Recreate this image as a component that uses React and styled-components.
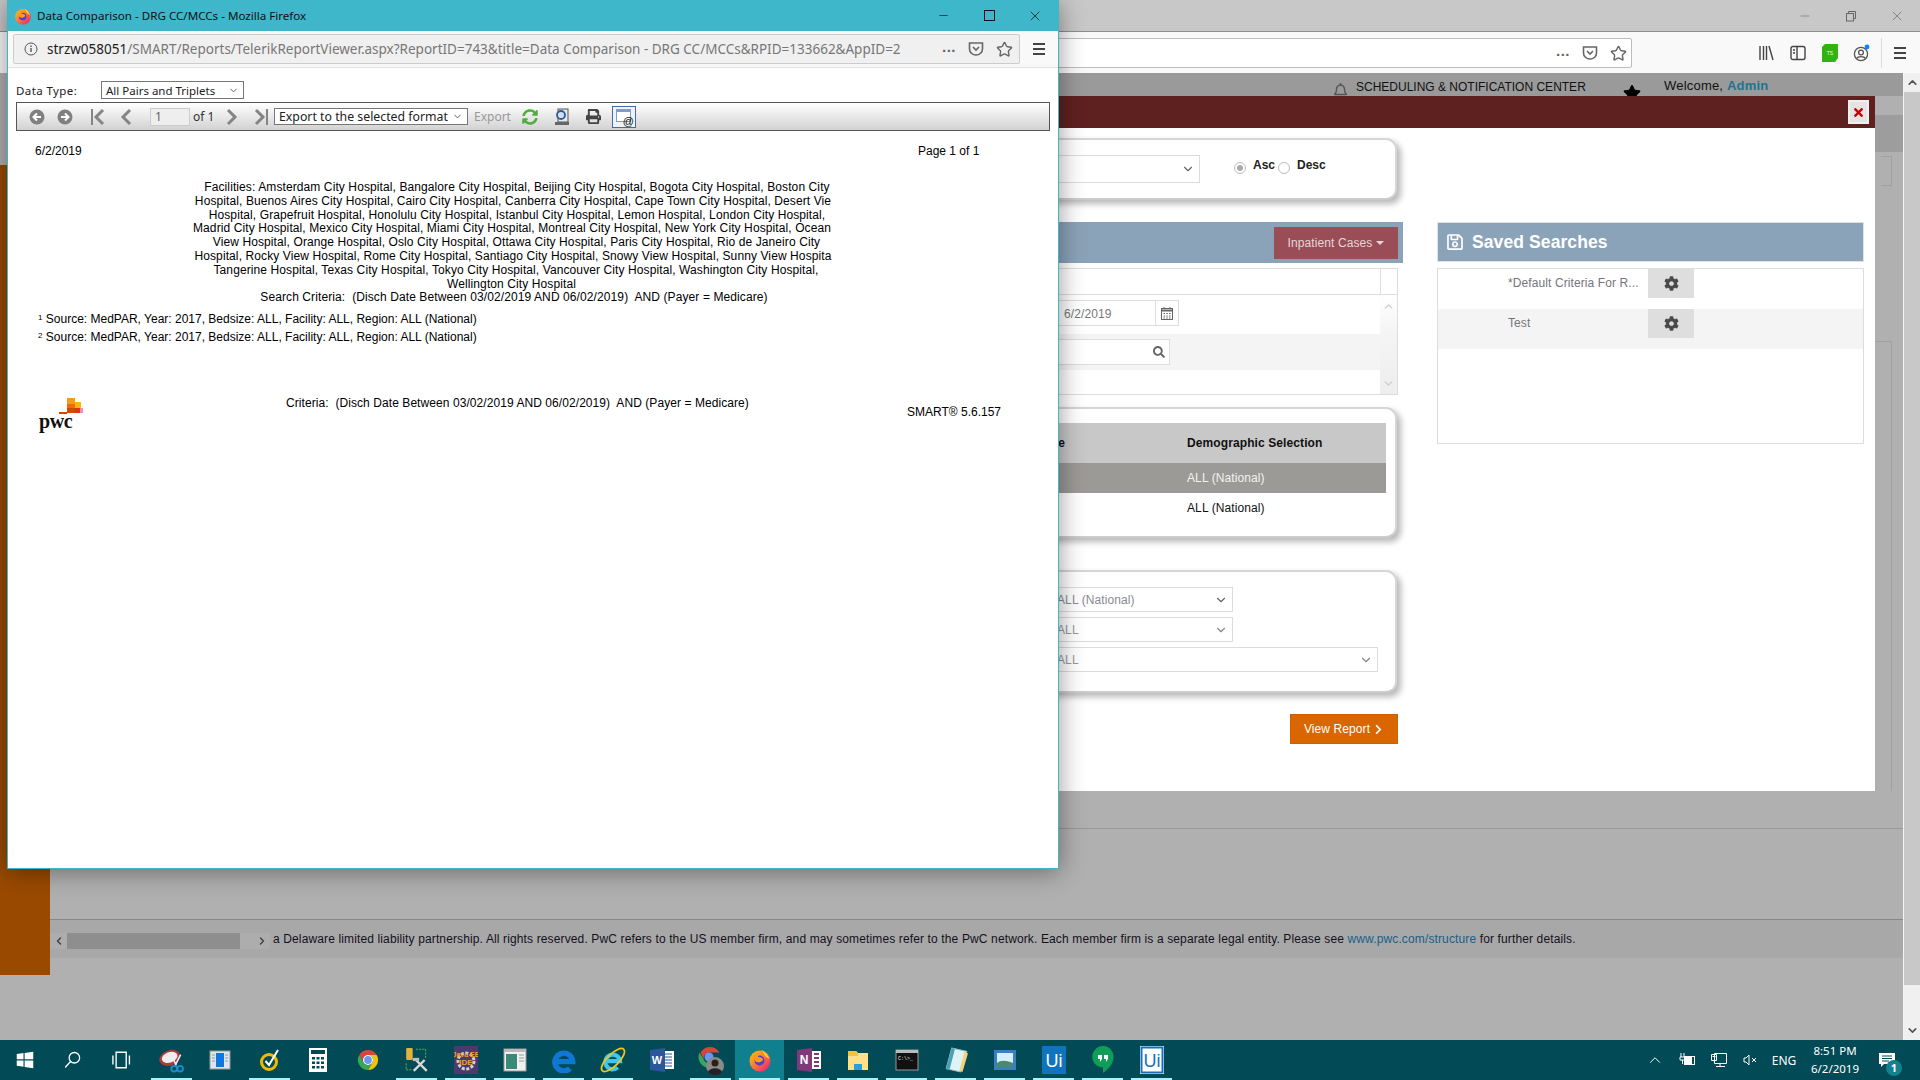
import React from "react";
import styled, { createGlobalStyle } from "styled-components";
import { FaCog, FaSearch, FaPrint, FaSyncAlt, FaRegSave, FaChevronRight, FaTimes, FaStar, FaRegBell } from "react-icons/fa";
import { ChevronDown, ChevronUp, ChevronLeft, ChevronRight, Star, Minus, X } from "lucide-react";

const Global = createGlobalStyle`
  html, body { margin: 0; padding: 0; background: #b0b0b0; }
  * { box-sizing: border-box; }
  body { font-family: "Liberation Sans", Arial, sans-serif; font-size: 12px; }
`;

const UI = `"Noto Sans", "Open Sans", sans-serif`;

const Screen = styled.div`position: relative; width: 1920px; height: 1080px; overflow: hidden; display: flex; flex-direction: column;`;
const BackBrowser = styled.div`flex: 1; display: flex; flex-direction: column; min-height: 0;`;
const BackTitle = styled.div`height: 32px; background: #c8c8c8; border-bottom: 1px solid #8e8e8e; display: flex; justify-content: flex-end; align-items: center; color: #666;`;
const WinBtn = styled.div`width: 46px; display: flex; justify-content: center; align-items: center;`;
const RestoreIcon = () => (
  <svg width="12" height="12" viewBox="0 0 12 12" fill="none" stroke="#666"><rect x="1.5" y="3.5" width="7" height="7.5" /><path d="M3.5 3.5V1.5H10.5V8.5H8.5" /></svg>
);
const BackToolbar = styled.div`height: 41px; background: #f9f9f9; display: flex; align-items: center; padding-left: 100px;`;
const BackUrl = styled.div`flex: 1; height: 30px; margin-top: 1px; background: #fff; border: 1px solid #bdbdbd; border-radius: 2px; display: flex; justify-content: flex-end; align-items: center; gap: 12px; padding-right: 4px; color: #666;`;
const BackTools = styled.div`width: 288px; display: flex; align-items: center; height: 100%; padding-left: 118px;`;
const ToolCell = styled.div`width: 32px; display: flex; justify-content: center; align-items: center; color: #555;`;
const Dots = styled.span`font-size: 15px; font-weight: 700; letter-spacing: 0.5px; line-height: 1; color: #666; font-family: "Liberation Sans", sans-serif; margin-top: -6px;`;
const ToolSep = styled.div`width: 1px; height: 30px; background: #ddd; margin: 0 2px 0 3px;`;

const PocketIcon = ({ size = 16 }) => (
  <svg width={size} height={size} viewBox="0 0 16 16" fill="none" stroke="#666" strokeWidth="1.6"><path d="M1.5 2h13v6a6.5 6 0 0 1-13 0z" /><path d="M5 6l3 3 3-3" /></svg>
);
const Burger = () => (
  <svg width="14" height="14" viewBox="0 0 14 14" stroke="#444" strokeWidth="2"><path d="M1 2h12M1 7h12M1 12h12" /></svg>
);
const LibraryIcon = () => (
  <svg width="16" height="16" viewBox="0 0 16 16" stroke="#444" strokeWidth="1.4" fill="none"><path d="M2 1v14M5.5 1v14M8.5 1v14M11 1l4 14" /></svg>
);
const SidebarIcon = () => (
  <svg width="16" height="16" viewBox="0 0 16 16" stroke="#444" strokeWidth="1.4" fill="none"><rect x="1" y="1.5" width="14" height="13" rx="2" /><path d="M7 1.5v13M3 5h2M3 8h2" /></svg>
);
const TsIcon = () => (
  <svg width="16" height="18" viewBox="0 0 16 18"><path d="M3 0h13v14l-3 4H0V3z" fill="#33b210" /><text x="8" y="11" fontSize="5" fill="#eaffea" textAnchor="middle" fontFamily="Liberation Sans">TS</text></svg>
);
const AccountIcon = () => (
  <svg width="18" height="18" viewBox="0 0 18 18" fill="none" stroke="#555" strokeWidth="1.3"><circle cx="8" cy="10" r="6.6" /><circle cx="8" cy="8.5" r="2.4" /><path d="M3.8 14.5c1-2.6 7.4-2.6 8.4 0" /><circle cx="14" cy="3" r="2.4" fill="#0a84ff" stroke="none" /></svg>
);

const Page = styled.div`flex: 1; display: grid; grid-template-columns: 50px 1fr 17px; background: #b0b0b0; min-height: 0;`;
const Sidebar = styled.div`margin-top: 92px; height: 810px; background: #9a4a00;`;
const Content = styled.div`display: flex; flex-direction: column; min-width: 0;`;
const TopStrip = styled.div`height: 23px; background: #9a9a9a; display: flex; color: #111; padding-left: 1283px; overflow: visible;`;
const BellWrap = styled.div`width: 23px; padding-top: 10px; color: #555; font-size: 15px;`;
const NotifText = styled.div`width: 267px; padding-top: 7px; font-size: 12px; white-space: nowrap; line-height: 14px;`;
const StarWrap = styled.div`width: 41px; padding-top: 11px; font-size: 18px; color: #000; line-height: 1;`;
const Welcome = styled.div`padding-top: 5px; font-size: 13px; line-height: 15px; white-space: nowrap; letter-spacing: 0.2px;`;
const AdminName = styled.span`color: #1f7490; font-weight: 700;`;
const MainBack = styled.div`flex: 1; display: flex; flex-direction: column; align-items: flex-end; padding-top: 19px;`;
const DarkBox = styled.div`width: 29px; height: 37px; background: #9d9d9d;`;
const LineBox = styled.div`width: 11px; margin: 4px 11px 0 0; height: 30px; border: 1px solid #a0a0a0; border-left: 0;`;
const LineBoxTall = styled(LineBox)`margin-top: 155px; height: 450px; width: 18px; border-bottom: 0; margin-right: 11px;`;
const BottomPane = styled.div`height: 212px; border-top: 1px solid #999; padding-top: 90px;`;
const FooterStrip = styled.div`height: 39px; background: #a8a8a8; border-top: 1px solid #888; padding-top: 13px; display: flex; color: #14101e;`;
const HScroll = styled.div`width: 220px; height: 16px; background: #adadad; display: flex; align-items: center; color: #444; flex-shrink: 0;`;
const HArrow = styled.div`width: 17px; display: flex; justify-content: center;`;
const HThumb = styled.div`width: 173px; height: 16px; background: #8e8e8e;`;
const HTrack = styled.div`flex: 1;`;
const FooterText = styled.div`margin: -1px 0 0 3px; line-height: 14px; white-space: nowrap; font-size: 12px; letter-spacing: 0.13px;`;
const FootLink = styled.span`color: #1a5f88;`;
const VScroll = styled.div`background: #f0f0f0; border-left: 1px solid #f4f4f4; display: flex; flex-direction: column; color: #555;`;
const VArrow = styled.div`height: 19px; display: flex; justify-content: center; align-items: center;`;
const VThumb = styled.div`height: 893px; background: #c8c8c8;`;
const VTrack = styled.div`flex: 1;`;

const Overlay = styled.div`position: absolute; left: 1000px; top: 96px; width: 875px; height: 695px; background: #fff; display: flex; flex-direction: column; letter-spacing: 0.1px;`;
const ModalBar = styled.div`height: 32px; background: #5f2120; display: flex; justify-content: flex-end; align-items: center; padding-right: 6px;`;
const CloseBtn = styled.div`width: 21px; height: 24px; background: #e4e4e4; border: 2px solid #efefef; display: flex; align-items: center; justify-content: center; color: #c00; font-size: 13px;`;
const ModalBody = styled.div`flex: 1; display: flex; padding: 10px 11px 0 0; gap: 34px;`;
const LeftCol = styled.div`width: 403px; display: flex; flex-direction: column;`;
const RightCol = styled.div`flex: 1; padding-top: 84px;`;
const Card = styled.div`width: 397px; height: ${p => p.$h}px; margin-top: ${p => p.$mt || 0}px; background: #fff; border: 2px solid #d6d6d6; border-left: 0; border-bottom-color: #ccc; border-radius: 0 11px 11px 0; box-shadow: 4px 4px 6px rgba(0,0,0,.28);`;
const SortRow = styled.div`display: flex; align-items: center; padding-top: 13px;`;
const SelectBox = styled.div`height: ${p => p.$h || 25}px; width: ${p => p.$w}px; margin-top: ${p => p.$mt || 0}px; border: 1px solid #dcdcdc; background: #fff; display: flex; align-items: center; justify-content: space-between; padding: 0 4px 0 ${p => p.$pl || 8}px; color: ${p => p.$c || "#999"}; font-size: 12px; flex-shrink: 0;`;
const Radio = styled.span`width: 12px; height: 12px; border-radius: 50%; border: 1px solid #bbb; background: #fff; margin-left: ${p => p.$ml}px; display: flex; align-items: center; justify-content: center; flex-shrink: 0;`;
const RadioDot = styled.span`width: 6px; height: 6px; border-radius: 50%; background: #aaa;`;
const RadioLabel = styled.span`font-weight: 700; font-size: 12px; color: #222; margin: -7px 0 0 ${p => p.$ml}px; line-height: 14px; letter-spacing: 0;`;
const PanelHead = styled.div`margin-top: 22px; height: 41px; background: #8ba3b8; display: flex; justify-content: flex-end; align-items: center; padding-right: 5px;`;
const CaseBtn = styled.div`width: 124px; height: 32px; background: #9b4d57; color: #e6d6d8; font-size: 12px; display: flex; align-items: center; justify-content: center; gap: 4px;`;
const Caret = styled.span`width: 0; height: 0; border-left: 4px solid transparent; border-right: 4px solid transparent; border-top: 4px solid #e6d6d8;`;
const Grid = styled.div`margin-top: 5px; width: 398px; height: 127px; border: 1px solid #ddd; border-left: 0; display: flex; flex-direction: column;`;
const GridHead = styled.div`height: 27px; border-bottom: 1px solid #ddd; display: flex; justify-content: flex-end;`;
const GridHeadCell = styled.div`width: 17px; border-left: 1px solid #ddd;`;
const GridBody = styled.div`flex: 1; display: flex;`;
const GridRows = styled.div`flex: 1; display: flex; flex-direction: column;`;
const GridRow = styled.div`height: ${p => p.$h}px; background: ${p => p.$alt ? "#f4f4f4" : "#fff"}; padding-top: ${p => p.$pt || 0}px;`;
const GridScroll = styled.div`width: 17px; background: linear-gradient(#fff 0, #f4f4f4 40%, #eee 100%); color: #ccc; display: flex; flex-direction: column; justify-content: space-between; align-items: center; padding: 5px 0 4px;`;
const DateField = styled.div`margin-left: 10px; width: 169px; height: 26px; border: 1px solid #ddd; background: #fff; display: flex; justify-content: flex-end; color: #777; font-size: 12px;`;
const DateText = styled.div`flex: 1; padding: 6px 0 0 0; margin-left: 53px; line-height: 14px;`;
const DateBtn = styled.div`width: 23px; border-left: 1px solid #ddd; display: flex; align-items: center; justify-content: center;`;
const SearchField = styled.div`margin-left: 10px; width: 160px; height: 26px; border: 1px solid #ddd; background: #fff; display: flex; justify-content: flex-end; align-items: center; padding-right: 4px; color: #777; font-size: 12px;`;
const DemoHead = styled.div`margin-top: 14px; width: 386px; height: 40px; background: #c8c8c8; display: flex; align-items: center; font-weight: 700; color: #111; font-size: 12px;`;
const DemoRow = styled.div`width: 386px; height: 30px; background: ${p => p.$sel ? "#9b9a97" : "#fff"}; color: ${p => p.$sel ? "#f2f2f2" : "#111"}; display: flex; align-items: center; font-size: 12px;`;
const DemoCellA = styled.div`width: 187px; text-align: right; padding-right: 122px; flex-shrink: 0;`;
const FilterStack = styled.div`padding-top: 15px;`;
const ViewRow = styled.div`width: 398px; display: flex; justify-content: flex-end; margin-top: 21px;`;
const ViewBtn = styled.div`width: 108px; height: 30px; background: #da6600; border: 1px solid #cf6000; color: #fff; font-size: 12px; display: flex; align-items: center; justify-content: center; gap: 3px;`;
const SavedHead = styled.div`height: 40px; background: #8ba3b8; border: 1px solid #dde3e8; display: flex; align-items: center; color: #fff; font-weight: 700; font-size: 17.5px; padding-left: 8px; gap: 8px;`;
const SavedBody = styled.div`margin-top: 6px; height: 176px; border: 1px solid #ddd; background: #fff;`;
const SavedRow = styled.div`height: 40px; display: flex; background: ${p => p.$alt ? "#f4f4f4" : "#fff"}; color: #76757c; font-size: 12px;`;
const SavedName = styled.div`margin-left: 70px; width: 140px; padding-top: 7px; line-height: 14px; white-space: nowrap;`;
const GearBtn = styled.div`width: 46px; height: 29px; background: #dedede; color: #4a4a4a; display: flex; align-items: center; justify-content: center; font-size: 15px;`;

const Popup = styled.div`position: absolute; left: 7px; top: 0; width: 1052px; height: 869px; background: #fff; border: 1px solid #3cb6c8; border-top: 0; box-shadow: 0 2px 24px rgba(0,0,0,.42); display: flex; flex-direction: column;`;
const PopTitle = styled.div`height: 31px; background: #3db7c9; display: flex; align-items: center; padding-left: 6px; color: #111; font-family: ${UI}; font-size: 11.6px; flex-shrink: 0;`;
const PopTitleText = styled.div`flex: 1; margin-left: 5px; white-space: nowrap;`;
const PopWinBtn = styled.div`width: 46px; display: flex; justify-content: center; align-items: center; color: #111;`;
const PopNav = styled.div`height: 37px; background: #f9f9f9; border-bottom: 1px solid #e2e2e2; display: flex; align-items: center; padding-left: 5px; flex-shrink: 0;`;
const PopUrl = styled.div`width: 1007px; height: 30px; background: #f0f0f0; border: 1px solid #ccc; border-radius: 2px; display: flex; align-items: center; padding: 0 6px 0 10px; font-family: ${UI}; font-size: 13.5px; color: #777; gap: 9px;`;
const UrlText = styled.div`flex: 1; white-space: nowrap; overflow: hidden;`;
const UrlHost = styled.span`color: #222;`;
const UrlIcons = styled.div`display: flex; align-items: center; gap: 12px; color: #666;`;
const PopBurger = styled.div`width: 38px; display: flex; justify-content: center;`;
const InfoIcon = () => (
  <svg width="14" height="14" viewBox="0 0 14 14" fill="none" stroke="#555"><circle cx="7" cy="7" r="6" /><path d="M7 6v4M7 3.5v1.4" strokeWidth="1.4" /></svg>
);
const FilterRow = styled.div`height: 34px; display: flex; align-items: center; padding: 10px 0 0 8px; font-family: ${UI}; font-size: 11.5px; color: #222; flex-shrink: 0;`;
const FilterLabel = styled.div`width: 85px; letter-spacing: 0.4px;`;
const NativeSel = styled.div`width: ${p => p.$w}px; height: ${p => p.$h}px; margin-left: ${p => p.$ml || 0}px; border: 1px solid #777; background: #fff; display: flex; align-items: center; justify-content: space-between; padding: 0 4px; font-family: ${UI}; font-size: ${p => p.$fs || 11.5}px; color: #222; flex-shrink: 0; white-space: nowrap;`;
const RepBar = styled.div`margin: 0 8px; height: 29px; border: 1px solid #555; background: linear-gradient(#fff, #d2d2d2); display: flex; align-items: center; padding-left: 11px; flex-shrink: 0; font-family: ${UI}; font-size: 12px;`;
const Slot = styled.div`width: ${p => p.$w || 18}px; margin-left: ${p => p.$ml || 0}px; display: flex; justify-content: center; align-items: center; flex-shrink: 0;`;
const PageInput = styled.div`width: 40px; height: 18px; margin-left: 15px; border: 1px solid #ccc; background: #eee; color: #666; padding-left: 4px; line-height: 16px; flex-shrink: 0;`;
const OfText = styled.div`margin-left: 3px; width: 30px; color: #333; white-space: nowrap;`;
const ExportText = styled.div`margin-left: 6px; width: 37px; color: #999;`;
const MailBtn = styled.div`width: 24px; height: 22px; margin-left: 10px; border: 1px solid #3a6ea5; background: #eef3f8; position: relative; flex-shrink: 0;`;
const MailAt = styled.span`position: absolute; right: 1px; bottom: 0; font-size: 11px; line-height: 11px; color: #111; font-family: "Liberation Sans", sans-serif;`;
const MailDoc = styled.span`position: absolute; left: 3px; top: 2px; width: 15px; height: 13px; background: #fff; border: 1px solid #7aa0c4; border-top-width: 3px;`;
const Report = styled.div`flex: 1; color: #000; font-size: 12px; line-height: 14px; display: flex; flex-direction: column;`;
const RepHead = styled.div`display: flex; padding: 13px 0 0 27px;`;
const RepDate = styled.div`width: 883px;`;
const CenterBlock = styled.div`margin-top: 23px; width: 1012px; text-align: center; line-height: 13.8px; white-space: pre; letter-spacing: 0.1px;`;
const CenterLine = styled.div`margin-left: ${p => p.$dx * 2}px;`;
const SourceLine = styled.div`margin: ${p => p.$mt}px 0 0 30px;`;
const Sup = styled.sup`font-size: 8px; line-height: 0; vertical-align: 3px;`;
const RepFoot = styled.div`display: flex; margin-top: 52px; padding-left: 31px;`;
const Logo = styled.div`width: 44px; height: 34px; margin-top: 2px; display: flex; justify-content: flex-end; position: relative; flex-shrink: 0;`;
const PwcWord = styled.span`position: absolute; left: 0; bottom: 2px; font-family: "Liberation Serif", serif; font-weight: 700; font-size: 20px; line-height: 18px; letter-spacing: -0.4px; color: #111;`;
const Criteria = styled.div`margin-left: 203px; width: 463px; white-space: pre; flex-shrink: 0; letter-spacing: 0.07px;`;
const SmartVer = styled.div`margin: 9px 0 0 158px; white-space: nowrap;`;

const Taskbar = styled.div`height: 40px; background: #014a56; display: flex; color: #fff; flex-shrink: 0;`;
const TaskSlot = styled.div`width: 49px; height: 40px; display: flex; align-items: center; justify-content: center; position: relative; background: ${p => p.$cur ? "#11808e" : "transparent"}; flex-shrink: 0;
  &::after { content: ""; position: absolute; left: 4px; right: 4px; bottom: 0; height: 2px; background: ${p => p.$on ? "#a8f2f8" : "transparent"}; }`;
const Tray = styled.div`flex: 1; display: flex; justify-content: flex-end; align-items: center; font-family: ${UI}; padding-right: 16px;`;
const TrayCell = styled.div`width: ${p => p.$w}px; display: flex; justify-content: center; align-items: center; font-size: 12px;`;
const Clock = styled.div`width: 70px; text-align: center; font-size: 11.5px; line-height: 18px;`;
const Notif = styled.div`width: 34px; height: 40px; position: relative; display: flex; align-items: center; justify-content: center;`;
const Badge = styled.div`position: absolute; left: 16px; top: 20px; width: 16px; height: 16px; border-radius: 50%; background: #12808e; font-size: 11px; font-weight: 700; line-height: 16px; text-align: center; color: #fff;`;

const Ic = ({ children, s = 24 }) => <svg width={s} height={s} viewBox="0 0 24 24">{children}</svg>;
const FirefoxIc = ({ s = 24, id = "ffg" }) => (
  <Ic s={s}>
    <defs><linearGradient id={id} x1="0" y1="0" x2="1" y2="1"><stop offset="0" stopColor="#ffcb00" /><stop offset=".5" stopColor="#ff7139" /><stop offset="1" stopColor="#e31587" /></linearGradient></defs>
    <circle cx="12" cy="13" r="10.5" fill={`url(#${id})`} />
    <path d="M14 2c3 2 6 5 7.5 9L17 8z" fill="#ffd43b" />
    <circle cx="11.5" cy="12.5" r="5" fill="#4a3fcf" />
    <path d="M5 9c3-4 7-5 9-3-2 0-4 1-4 3 3 0 5 1 5 3-2 3-6 3-8 1z" fill="#ff9a1f" />
  </Ic>
);
const ChromeIc = () => (
  <Ic>
    <path d="M3.3 7A10 10 0 0 1 20.7 7H12A5 5 0 0 0 7.7 14.5Z" fill="#db4437" />
    <path d="M20.7 7A10 10 0 0 1 12 22L16.3 14.5A5 5 0 0 0 12 7Z" fill="#f4c20d" />
    <path d="M12 22A10 10 0 0 1 3.3 7L7.7 14.5A5 5 0 0 0 16.3 14.5Z" fill="#3aa757" />
    <circle cx="12" cy="12" r="5" fill="#fff" /><circle cx="12" cy="12" r="3.9" fill="#6a98ef" />
  </Ic>
);
const TaskIcons = {
  win: <Ic s={18}><path d="M1 4l9-1.2V11H1zM11.5 2.500L23 1v10H11.500zM1 12.500h9v8.500l-9-1.200zM11.500 12.500H23V23l-11.500-1.600z" fill="#fff" /></Ic>,
  search: <Ic s={18}><circle cx="12.500" cy="9" r="7" fill="none" stroke="#fff" strokeWidth="1.7" /><path d="M7.500 14L0 22" stroke="#fff" strokeWidth="1.900" /></Ic>,
  view: <Ic s={22}><path d="M4.500 3.500h11v17h-11zM1 7v10M19 7v10" fill="none" stroke="#fff" strokeWidth="1.500" /></Ic>,
  snip: <Ic s={26}><ellipse cx="10" cy="10" rx="10" ry="7" transform="rotate(-20 10 10)" fill="#b03a3a" /><ellipse cx="10" cy="9.500" rx="7.500" ry="4.800" transform="rotate(-20 10 10)" fill="#eee" /><path d="M12 9l4 8M20 7l-5 10" stroke="#eef" strokeWidth="1.400" /><circle cx="14" cy="20" r="2.600" fill="none" stroke="#1a8ed0" strokeWidth="1.800" /><circle cx="19.500" cy="20" r="2.600" fill="none" stroke="#1a8ed0" strokeWidth="1.800" /></Ic>,
  blue: <Ic><rect x="1" y="3" width="20" height="18" fill="#dfe5ea" stroke="#8d9aa3" /><rect x="7" y="5" width="8" height="14" fill="#0e78e0" /><path d="M3 7h3M3 10h3M3 13h3M16 7h3M16 10h3M16 13h3" stroke="#8d9aa3" /></Ic>,
  norton: <Ic><circle cx="11" cy="14" r="7.500" fill="none" stroke="#f5b800" strokeWidth="3" /><path d="M7.500 13l3.500 4L20 2" fill="none" stroke="#fff" strokeWidth="2" /></Ic>,
  calc: <Ic s={24}><rect x="2" y="0" width="18" height="24" fill="#fff" /><rect x="4" y="2" width="14" height="4" fill="#014a56" /><path d="M5 9h3v2.500H5zM9.500 9h3v2.500h-3zM14 9h3v2.500h-3zM5 13.500h3V16H5zM9.500 13.500h3V16h-3zM14 13.500h3V16h-3zM5 18h3v2.500H5zM9.500 18h3v2.500h-3zM14 18h3v2.500h-3z" fill="#014a56" /></Ic>,
  chrome: <ChromeIc />,
  tools: <Ic s={26}><rect x="2" y="1" width="6" height="11" rx="1" fill="#e3b23c" /><path d="M11 2h9v9M2 15v6h6" fill="none" stroke="#4caf50" strokeDasharray="2 1" /><path d="M9 22l10-10M21 22L11 12" stroke="#d8d8d8" strokeWidth="2.200" /><path d="M8 10h6v3H8z" fill="#bbb" /></Ic>,
  java: <svg width="24" height="28" viewBox="0 0 24 28"><rect width="24" height="28" fill="#4b3a6e" /><circle cx="12" cy="15" r="8" fill="none" stroke="#d0d0d0" strokeWidth="3" strokeDasharray="3 1.600" /><text x="12" y="11" fontSize="7" fill="#f0a030" textAnchor="middle" fontFamily="Liberation Sans" fontWeight="700">Java EE</text><text x="12" y="19" fontSize="8" fill="#f0a030" textAnchor="middle" fontFamily="Liberation Sans" fontWeight="700">IDE</text></svg>,
  window: <Ic><rect x="1" y="1" width="22" height="22" fill="#f0f0f0" stroke="#999" /><rect x="1" y="1" width="22" height="3" fill="#bbb" /><rect x="3" y="6" width="11" height="15" fill="#3b8a78" /><path d="M16 7h5M16 10h5M16 13h5" stroke="#999" /></Ic>,
  edge: <Ic s={26}><path d="M4 13.500h16a8.200 8.200 0 1 0-2.600 6.400" fill="none" stroke="#0f78d4" strokeWidth="5" /></Ic>,
  ie: <Ic s={28}><path d="M6 13h12a6.300 6.300 0 1 0-2 5.400" fill="none" stroke="#3ec6ee" strokeWidth="3.600" /><ellipse cx="12" cy="12" rx="13" ry="5" transform="rotate(-45 12 12)" fill="none" stroke="#f5c518" strokeWidth="1.500" /></Ic>,
  word: <svg width="24" height="24" viewBox="0 0 24 24"><rect x="7" y="3" width="17" height="18" fill="#fff" /><path d="M15 6h7M15 9h7M15 12h7M15 15h7M15 18h7" stroke="#2b579a" /><path d="M0 2l15-2v24L0 22z" fill="#2b579a" /><text x="7" y="16" fontSize="11" fontWeight="700" fill="#fff" textAnchor="middle" fontFamily="Liberation Sans">W</text></svg>,
  chromeMe: <svg width="26" height="30" viewBox="0 0 26 30"><g transform="translate(0 1)"><path d="M2.500 6.500A11 11 0 0 1 21.500 6.500H11A5.500 5.500 0 0 0 6.300 14.500Z" fill="#db4437" /><path d="M1.500 6.500A11 11 0 0 0 11 22L15.700 14.500A5.500 5.500 0 0 1 6.300 14.500Z" fill="#3aa757" /><circle cx="11" cy="11" r="4.500" fill="#6a98ef" /></g><circle cx="17" cy="21" r="9" fill="#8a8a8a" /><circle cx="17" cy="18" r="3.500" fill="#2a2018" /><path d="M10 27c2-5 12-5 14 0a9 9 0 0 1-14 0z" fill="#222" /></svg>,
  firefox: <FirefoxIc id="ffg2" />,
  onenote: <svg width="24" height="24" viewBox="0 0 24 24"><rect x="9" y="3" width="15" height="18" fill="#fff" /><path d="M17 6h5M17 10h5M17 14h5M17 18h5" stroke="#80397b" strokeWidth="2" /><path d="M0 2l15-2v24L0 22z" fill="#80397b" /><text x="7" y="16" fontSize="12" fontWeight="700" fill="#fff" textAnchor="middle" fontFamily="Liberation Sans">N</text></svg>,
  explorer: <Ic><path d="M2 3h8l2 2h10v17H2z" fill="#ffe08a" /><path d="M2 3h8l2 2v3H2z" fill="#f3c33c" /><path d="M8 22v-6h8v6zM10 19h4v3h-4z" fill="#2d9fd8" /></Ic>,
  cmd: <Ic><rect x="1" y="2" width="22" height="20" fill="#111" stroke="#999" /><rect x="1" y="2" width="22" height="3" fill="#bbb" /><text x="3" y="12" fontSize="5" fill="#eee" fontFamily="Liberation Mono">C:\&gt;_</text></Ic>,
  note: <Ic s={26}><path d="M8 1l14 3-6 19-13-3z" fill="#dff3f7" stroke="#8fb7c2" /><path d="M20 4l3 2-5 17-3-1z" fill="#f2d27a" /><path d="M3 20l5-19 3 1-5 19z" fill="#4aa0b5" /></Ic>,
  pic: <Ic><rect x="1" y="2" width="22" height="20" fill="#3a7fc0" /><rect x="4" y="5" width="16" height="14" fill="#d6eef8" /><path d="M4 15c4-3 8-3 16 0v4H4z" fill="#4a8a70" /></Ic>,
  ui: <svg width="24" height="28" viewBox="0 0 24 28"><rect width="24" height="28" fill="#0f73bf" /><text x="12" y="21" fontSize="18" fill="#fff" textAnchor="middle" fontFamily="Liberation Sans">Ui</text></svg>,
  hang: <svg width="22" height="28" viewBox="0 0 22 28"><path d="M11 0a10.500 10.500 0 0 1 10.500 11c0 7-5 12-10.500 16v-5.500A10.500 10.500 0 0 1 11 0z" fill="#0f9d58" /><path d="M6 9h4v4l-2 3v-3H6zM12 9h4v4l-2 3v-3h-2z" fill="#fff" /></svg>,
  ui2: <svg width="24" height="28" viewBox="0 0 24 28"><rect width="24" height="28" fill="#fff" /><rect x="1.500" y="1.500" width="21" height="25" fill="none" stroke="#0f73bf" strokeWidth="2" /><text x="12" y="21" fontSize="18" fill="#0f73bf" textAnchor="middle" fontFamily="Liberation Sans">Ui</text></svg>,
};
const taskItems = [
  ["win"], ["search"], ["view"], ["snip", 1], ["blue"], ["norton", 1], ["calc"], ["chrome"], ["tools", 1], ["java", 1], ["window", 1], ["edge", 1], ["ie", 1],
  ["word"], ["chromeMe", 1], ["firefox", 1, 1], ["onenote", 1], ["explorer", 1], ["cmd", 1], ["note", 1], ["pic", 1], ["ui", 1], ["hang", 1], ["ui2", 1],
];

const reportLines = [
  ["Facilities: Amsterdam City Hospital, Bangalore City Hospital, Beijing City Hospital, Bogota City Hospital, Boston City", 3],
  ["Hospital, Buenos Aires City Hospital, Cairo City Hospital, Canberra City Hospital, Cape Town City Hospital, Desert Vie", -1],
  ["Hospital, Grapefruit Hospital, Honolulu City Hospital, Istanbul City Hospital, Lemon Hospital, London City Hospital,", 3],
  ["Madrid City Hospital, Mexico City Hospital, Miami City Hospital, Montreal City Hospital, New York City Hospital, Ocean", -2],
  ["View Hospital, Orange Hospital, Oslo City Hospital, Ottawa City Hospital, Paris City Hospital, Rio de Janeiro City", 2.5],
  ["Hospital, Rocky View Hospital, Rome City Hospital, Santiago City Hospital, Snowy View Hospital, Sunny View Hospita", -1],
  ["Tangerine Hospital, Texas City Hospital, Tokyo City Hospital, Vancouver City Hospital, Washington City Hospital,", 2],
  ["Wellington City Hospital", -2.5],
  ["Search Criteria:  (Disch Date Between 03/02/2019 AND 06/02/2019)  AND (Payer = Medicare)", 0],
];

const NavCircle = ({ dir }) => (
  <svg width="16" height="16" viewBox="0 0 16 16">
    <circle cx="8" cy="8" r="7.500" fill="#808080" />
    <path d={dir === "l" ? "M12 8H5M8 4.500L4.500 8 8 11.500" : "M4 8h7M8 4.500L11.500 8 8 11.500"} fill="none" stroke="#fff" strokeWidth="2" />
  </svg>
);
const PageArrow = ({ dir, bar }) => (
  <svg width="18" height="18" viewBox="0 0 18 18" fill="none" stroke="#858585" strokeWidth="3">
    {dir === "l" ? <path d="M13 2L6 9l7 7" /> : <path d="M5 2l7 7-7 7" />}
    {bar && <path d={dir === "l" ? "M2 1v16" : "M16 1v16"} strokeWidth="2" />}
  </svg>
);
const PreviewIcon = () => (
  <svg width="18" height="18" viewBox="0 0 18 18"><rect x="5" y="1" width="10" height="13" fill="#e8e8e8" stroke="#555" /><circle cx="8" cy="7" r="4" fill="#cfe0f5" stroke="#2a5d9a" strokeWidth="1.800" /><path d="M2 14h14v3H2z" fill="#666" /></svg>
);
const CalendarIcon = () => (
  <svg width="14" height="15" viewBox="0 0 14 15" fill="none" stroke="#666"><rect x="1.500" y="2.500" width="11" height="11" /><path d="M1.500 4.500h11" strokeWidth="2" /><path d="M4 1v2M10 1v2M3.500 7.500h1.500M6.300 7.500h1.500M9 7.500h1.500M3.500 10h1.500M6.300 10h1.500M9 10h1.500M3.500 12h1.500M6.300 12h1.500M9 12h1.500" /></svg>
);
const PwcMark = () => (
  <svg width="24" height="16" viewBox="0 0 24 16">
    <rect x="0" y="14" width="8" height="2" fill="#d04a02" />
    <rect x="8" y="0" width="8" height="6" fill="#f59a1e" />
    <rect x="8" y="6" width="8" height="5" fill="#eb6e00" />
    <rect x="8" y="10" width="8" height="5" fill="#d04a02" />
    <rect x="16" y="4" width="6" height="6" fill="#ffb600" />
    <rect x="16" y="10" width="5" height="5" fill="#e0301e" />
    <rect x="21" y="10" width="3" height="5" fill="#f08fb0" />
  </svg>
);

export default function App() {
  return (
    <Screen>
      <Global />
      <BackBrowser>
        <BackTitle>
          <WinBtn><Minus size={14} strokeWidth={1} /></WinBtn>
          <WinBtn><RestoreIcon /></WinBtn>
          <WinBtn><X size={16} strokeWidth={1} /></WinBtn>
        </BackTitle>
        <BackToolbar>
          <BackUrl><Dots>...</Dots><PocketIcon /><Star size={17} strokeWidth={2} /></BackUrl>
          <BackTools>
            <ToolCell><LibraryIcon /></ToolCell>
            <ToolCell><SidebarIcon /></ToolCell>
            <ToolCell><TsIcon /></ToolCell>
            <ToolCell><AccountIcon /></ToolCell>
            <ToolSep />
            <ToolCell><Burger /></ToolCell>
          </BackTools>
        </BackToolbar>
        <Page>
          <Sidebar />
          <Content>
            <TopStrip>
              <BellWrap><FaRegBell /></BellWrap>
              <NotifText>SCHEDULING &amp; NOTIFICATION CENTER</NotifText>
              <StarWrap><FaStar /></StarWrap>
              <Welcome>Welcome, <AdminName>Admin</AdminName></Welcome>
            </TopStrip>
            <MainBack>
              <DarkBox />
              <LineBox />
              <LineBoxTall />
            </MainBack>
            <BottomPane>
              <FooterStrip>
                <HScroll>
                  <HArrow><ChevronLeft size={12} strokeWidth={3} /></HArrow>
                  <HThumb />
                  <HTrack />
                  <HArrow><ChevronRight size={12} strokeWidth={3} /></HArrow>
                </HScroll>
                <FooterText>a Delaware limited liability partnership. All rights reserved. PwC refers to the US member firm, and may sometimes refer to the PwC network. Each member firm is a separate legal entity. Please see <FootLink>www.pwc.com/structure</FootLink> for further details.</FooterText>
              </FooterStrip>
            </BottomPane>
          </Content>
          <VScroll>
            <VArrow><ChevronUp size={13} strokeWidth={3} /></VArrow>
            <VThumb />
            <VTrack />
            <VArrow><ChevronDown size={13} strokeWidth={3} /></VArrow>
          </VScroll>
        </Page>
      </BackBrowser>

      <Taskbar>
        {taskItems.map(([k, on, cur]) => (
          <TaskSlot key={k} $on={on} $cur={cur}>{TaskIcons[k]}</TaskSlot>
        ))}
        <Tray>
          <TrayCell $w={24}><ChevronUp size={18} strokeWidth={1.300} /></TrayCell>
          <TrayCell $w={40}><svg width="17" height="14" viewBox="0 0 17 14" fill="none" stroke="#fff"><rect x="5.500" y="3.500" width="10" height="8" /><rect x="6.500" y="4.500" width="6" height="6" fill="#fff" /><path d="M2 0v4M5 0v4M1 4h5v3H1zM3.500 7v4" /></svg></TrayCell>
          <TrayCell $w={24}><svg width="16" height="15" viewBox="0 0 16 15" fill="none" stroke="#fff"><path d="M3.500 .5h12v10h-12zM.5 1.500h5v6h-5zM9 10.500v3M5 13.500h9M1.500 3.500h3" /></svg></TrayCell>
          <TrayCell $w={37}><svg width="14" height="14" viewBox="0 0 14 14" fill="none" stroke="#fff"><path d="M1 5h2l3-3v10L3 9H1zM9 5l4 4M13 5l-4 4" /></svg></TrayCell>
          <TrayCell $w={32}>ENG</TrayCell>
          <Clock>8:51 PM<br />6/2/2019</Clock>
          <Notif>
            <svg width="16" height="16" viewBox="0 0 16 16"><path d="M0 1h16v11H5l-3 3v-3H0z" fill="#fff" /><path d="M3 4h10M3 6.500h10M3 9h7" stroke="#014a56" /></svg>
            <Badge>1</Badge>
          </Notif>
        </Tray>
      </Taskbar>

      <Overlay>
        <ModalBar><CloseBtn><FaTimes /></CloseBtn></ModalBar>
        <ModalBody>
          <LeftCol>
            <Card $h={62}>
              <SortRow>
                <SelectBox $w={200} $h={28} $mt={2}><span /><ChevronDown size={14} color="#666" /></SelectBox>
                <Radio $ml={34}><RadioDot /></Radio>
                <RadioLabel $ml={7}>Asc</RadioLabel>
                <Radio $ml={3} />
                <RadioLabel $ml={7}>Desc</RadioLabel>
              </SortRow>
            </Card>
            <PanelHead><CaseBtn>Inpatient Cases <Caret /></CaseBtn></PanelHead>
            <Grid>
              <GridHead><GridHeadCell /></GridHead>
              <GridBody>
                <GridRows>
                  <GridRow $h={39} $pt={5}>
                    <DateField><DateText>6/2/2019</DateText><DateBtn><CalendarIcon /></DateBtn></DateField>
                  </GridRow>
                  <GridRow $h={36} $alt $pt={5}>
                    <SearchField><FaSearch size={12} color="#666" /></SearchField>
                  </GridRow>
                  <GridRow $h={24} />
                </GridRows>
                <GridScroll><ChevronUp size={13} strokeWidth={2.500} /><ChevronDown size={13} strokeWidth={2.500} /></GridScroll>
              </GridBody>
            </Grid>
            <Card $h={131} $mt={12}>
              <DemoHead><DemoCellA>e</DemoCellA>Demographic Selection</DemoHead>
              <DemoRow $sel><DemoCellA />ALL (National)</DemoRow>
              <DemoRow><DemoCellA />ALL (National)</DemoRow>
            </Card>
            <Card $h={123} $mt={32}>
              <FilterStack>
                <SelectBox $w={233} $pl={56} $c="#8a8a92">ALL (National)<ChevronDown size={14} color="#666" /></SelectBox>
                <SelectBox $w={233} $pl={56} $mt={5}>ALL<ChevronDown size={14} color="#888" /></SelectBox>
                <SelectBox $w={378} $pl={56} $mt={5}>ALL<ChevronDown size={14} color="#888" /></SelectBox>
              </FilterStack>
            </Card>
            <ViewRow><ViewBtn>View Report <FaChevronRight size={11} /></ViewBtn></ViewRow>
          </LeftCol>
          <RightCol>
            <SavedHead><FaRegSave size={18} />Saved Searches</SavedHead>
            <SavedBody>
              <SavedRow><SavedName>*Default Criteria For R...</SavedName><GearBtn><FaCog /></GearBtn></SavedRow>
              <SavedRow $alt><SavedName>Test</SavedName><GearBtn><FaCog /></GearBtn></SavedRow>
            </SavedBody>
          </RightCol>
        </ModalBody>
      </Overlay>

      <Popup>
        <PopTitle>
          <FirefoxIc s={18} id="ffg1" />
          <PopTitleText>Data Comparison - DRG CC/MCCs - Mozilla Firefox</PopTitleText>
          <PopWinBtn><Minus size={13} strokeWidth={1.200} /></PopWinBtn>
          <PopWinBtn><svg width="11" height="11" viewBox="0 0 11 11" fill="none" stroke="#111"><rect x=".5" y=".5" width="10" height="10" /></svg></PopWinBtn>
          <PopWinBtn><X size={16} strokeWidth={1.100} /></PopWinBtn>
        </PopTitle>
        <PopNav>
          <PopUrl>
            <InfoIcon />
            <UrlText><UrlHost>strzw058051</UrlHost>/SMART/Reports/TelerikReportViewer.aspx?ReportID=743&amp;title=Data Comparison - DRG CC/MCCs&amp;RPID=133662&amp;AppID=2</UrlText>
            <UrlIcons><Dots>...</Dots><PocketIcon /><Star size={17} strokeWidth={2} /></UrlIcons>
          </PopUrl>
          <PopBurger><Burger /></PopBurger>
        </PopNav>
        <FilterRow>
          <FilterLabel>Data Type:</FilterLabel>
          <NativeSel $w={143} $h={18}>All Pairs and Triplets<ChevronDown size={11} color="#555" /></NativeSel>
        </FilterRow>
        <RepBar>
          <Slot><NavCircle dir="l" /></Slot>
          <Slot $ml={10}><NavCircle dir="r" /></Slot>
          <Slot $ml={16}><PageArrow dir="l" bar /></Slot>
          <Slot $ml={9}><PageArrow dir="l" /></Slot>
          <PageInput>1</PageInput>
          <OfText>of 1</OfText>
          <Slot><PageArrow dir="r" /></Slot>
          <Slot $ml={10}><PageArrow dir="r" bar /></Slot>
          <NativeSel $w={194} $h={17} $ml={5} $fs={12.300}>Export to the selected format<ChevronDown size={11} color="#555" /></NativeSel>
          <ExportText>Export</ExportText>
          <Slot $ml={10}><FaSyncAlt size={16} color="#4caf3a" /></Slot>
          <Slot $ml={14}><PreviewIcon /></Slot>
          <Slot $ml={13}><FaPrint size={15} color="#444" /></Slot>
          <MailBtn><MailDoc /><MailAt>@</MailAt></MailBtn>
        </RepBar>
        <Report>
          <RepHead><RepDate>6/2/2019</RepDate><div>Page 1 of 1</div></RepHead>
          <CenterBlock>{reportLines.map(([l, dx]) => <CenterLine key={l} $dx={dx}>{l}</CenterLine>)}</CenterBlock>
          <SourceLine $mt={7}><Sup>1</Sup> Source: MedPAR, Year: 2017, Bedsize: ALL, Facility: ALL, Region: ALL (National)</SourceLine>
          <SourceLine $mt={4}><Sup>2</Sup> Source: MedPAR, Year: 2017, Bedsize: ALL, Facility: ALL, Region: ALL (National)</SourceLine>
          <RepFoot>
            <Logo><PwcMark /><PwcWord>pwc</PwcWord></Logo>
            <Criteria>Criteria:  (Disch Date Between 03/02/2019 AND 06/02/2019)  AND (Payer = Medicare)</Criteria>
            <SmartVer>SMART® 5.6.157</SmartVer>
          </RepFoot>
        </Report>
      </Popup>
    </Screen>
  );
}
